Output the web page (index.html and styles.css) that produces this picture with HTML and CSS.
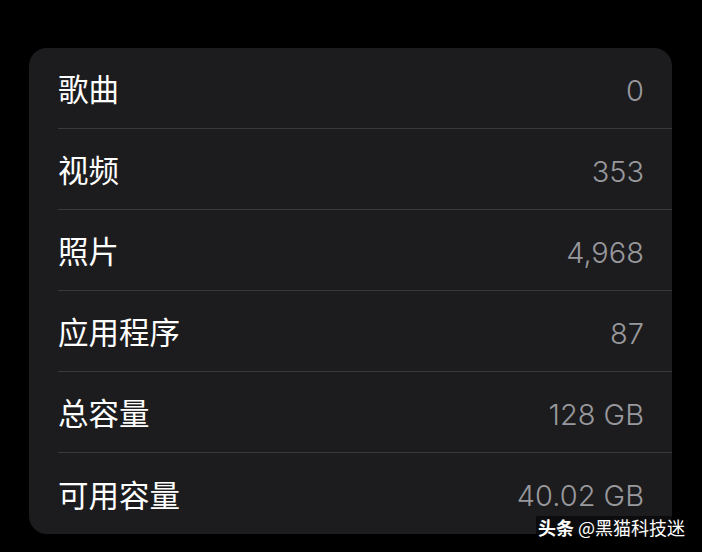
FILE: index.html
```html
<!DOCTYPE html>
<html lang="zh-CN">
<head>
  <meta charset="UTF-8">
  <title>储存空间</title>
  <link rel="stylesheet" href="styles.css">
</head>
<body>
  <div class="card">
    <div class="row"><span class="label">歌曲</span><span class="value">0</span></div>
    <div class="row"><span class="label">视频</span><span class="value">353</span></div>
    <div class="row"><span class="label">照片</span><span class="value">4,968</span></div>
    <div class="row"><span class="label">应用程序</span><span class="value">87</span></div>
    <div class="row"><span class="label">总容量</span><span class="value">128 GB</span></div>
    <div class="row"><span class="label">可用容量</span><span class="value">40.02 GB</span></div>
  </div>

  <!-- 水印 -->
  <div class="mark"><b>头条</b> @黑猫科技迷</div>
</body>
</html>
```

FILE: styles.css
```css
* {
  margin: 0;
  padding: 0;
  box-sizing: border-box;
}
html, body {
  width: 100%;
  height: 100%;
  background: #000;
  overflow: hidden;
  position: relative;
  font-family: Inter, "Noto Sans CJK SC", sans-serif;
}
body {
  padding: 48px 30px 0 29px;
}
.card {
  background: #1c1c1e;
  border-radius: 18px;
  padding-left: 29px;
}
.row {
  height: 81px;
  display: flex;
  justify-content: space-between;
  align-items: center;
  padding-right: 28px;
  border-bottom: 1px solid #38383a;
}
.row:last-child {
  border-bottom: none;
}
.label {
  color: #fff;
  font-size: 30.5px;
  font-family: "Noto Sans CJK SC", sans-serif;
}
.value {
  color: #98989d;
  font-size: 29px;
  font-weight: 300;
  padding-top: 4px;
}
.mark {
  position: absolute;
  right: 15px;
  bottom: 14px;
  padding: 0 2px;
  background: rgba(0, 0, 0, 0.55);
  color: #fff;
  font-size: 18px;
  font-family: "Noto Sans CJK SC", sans-serif;
  line-height: 22px;
}
.mark b {
  font-weight: 700;
}
```
